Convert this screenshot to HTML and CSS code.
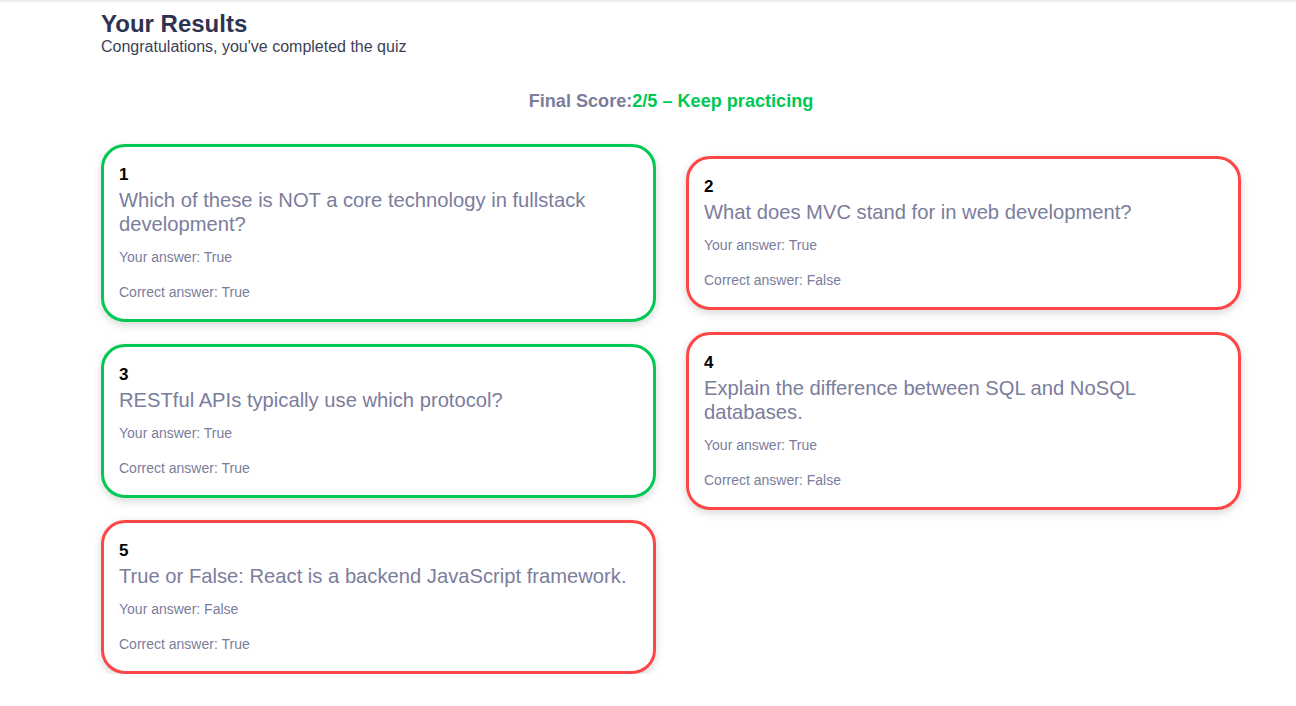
FILE: index.html
```html
<!DOCTYPE html>
<html lang="en">
<head>
<meta charset="utf-8">
<title>Your Results</title>
<link rel="stylesheet" href="styles.css">
</head>
<body>
<main class="results">
  <header class="results-header">
    <h1 class="title">Your Results</h1>
    <p class="subtitle">Congratulations, you've completed the quiz</p>
  </header>
  <p class="score"><span class="score-label">Final Score:</span><span class="score-value">2/5 – Keep practicing</span></p>
  <section class="cards">
    <article class="card correct">
      <h3 class="num">1</h3>
      <h2 class="question">Which of these is NOT a core technology in fullstack development?</h2>
      <p class="answer">Your answer: True</p>
      <p class="answer">Correct answer: True</p>
    </article>
    <article class="card wrong">
      <h3 class="num">2</h3>
      <h2 class="question">What does MVC stand for in web development?</h2>
      <p class="answer">Your answer: True</p>
      <p class="answer">Correct answer: False</p>
    </article>
    <article class="card correct">
      <h3 class="num">3</h3>
      <h2 class="question">RESTful APIs typically use which protocol?</h2>
      <p class="answer">Your answer: True</p>
      <p class="answer">Correct answer: True</p>
    </article>
    <article class="card wrong">
      <h3 class="num">4</h3>
      <h2 class="question">Explain the difference between SQL and NoSQL databases.</h2>
      <p class="answer">Your answer: True</p>
      <p class="answer">Correct answer: False</p>
    </article>
    <article class="card wrong">
      <h3 class="num">5</h3>
      <h2 class="question">True or False: React is a backend JavaScript framework.</h2>
      <p class="answer">Your answer: False</p>
      <p class="answer">Correct answer: True</p>
    </article>
  </section>
</main>
</body>
</html>
```

FILE: styles.css
```css
* { box-sizing: border-box; }
html, body { margin: 0; padding: 0; background: #fff; }
body {
  font-family: "Liberation Sans", Arial, sans-serif;
  border-top: 2px solid #eeeeee;
}
.results {
  width: 1140px;
  margin-left: 101px;
  padding-top: 8px;
}
.title {
  margin: 0;
  font-size: 24px;
  line-height: 28px;
  font-weight: 700;
  color: #2f3352;
}
.subtitle {
  margin: 0;
  font-size: 16px;
  line-height: 18px;
  color: #3c3f55;
}
.score {
  margin: 35px 0 0;
  text-align: center;
  font-size: 18.1px;
  line-height: 21px;
  font-weight: 700;
}
.score-label { color: #7b7d9c; }
.score-value { color: #00c853; }
.cards {
  margin-top: 32px;
  display: grid;
  grid-template-columns: 555px 555px;
  column-gap: 30px;
  row-gap: 10px;
  align-items: center;
}
.card {
  border: 3px solid #00c853;
  border-radius: 24px;
  background: #fff;
  padding: 19px 15px 19px;
  box-shadow: 0 3px 8px rgba(0, 0, 0, 0.16);
}
.card.correct { border-color: #00c853; }
.card.wrong { border-color: #ff4646; }
.num {
  margin: 0 0 4px;
  font-size: 17px;
  line-height: 18px;
  font-weight: 700;
  color: #000;
}
.question {
  margin: 0 0 13px;
  font-size: 20.2px;
  line-height: 24px;
  font-weight: 400;
  color: #7b7d9c;
}
.answer {
  margin: 0;
  font-size: 14px;
  line-height: 16px;
  color: #7b7d9c;
}
.answer + .answer { margin-top: 19px; }
```
